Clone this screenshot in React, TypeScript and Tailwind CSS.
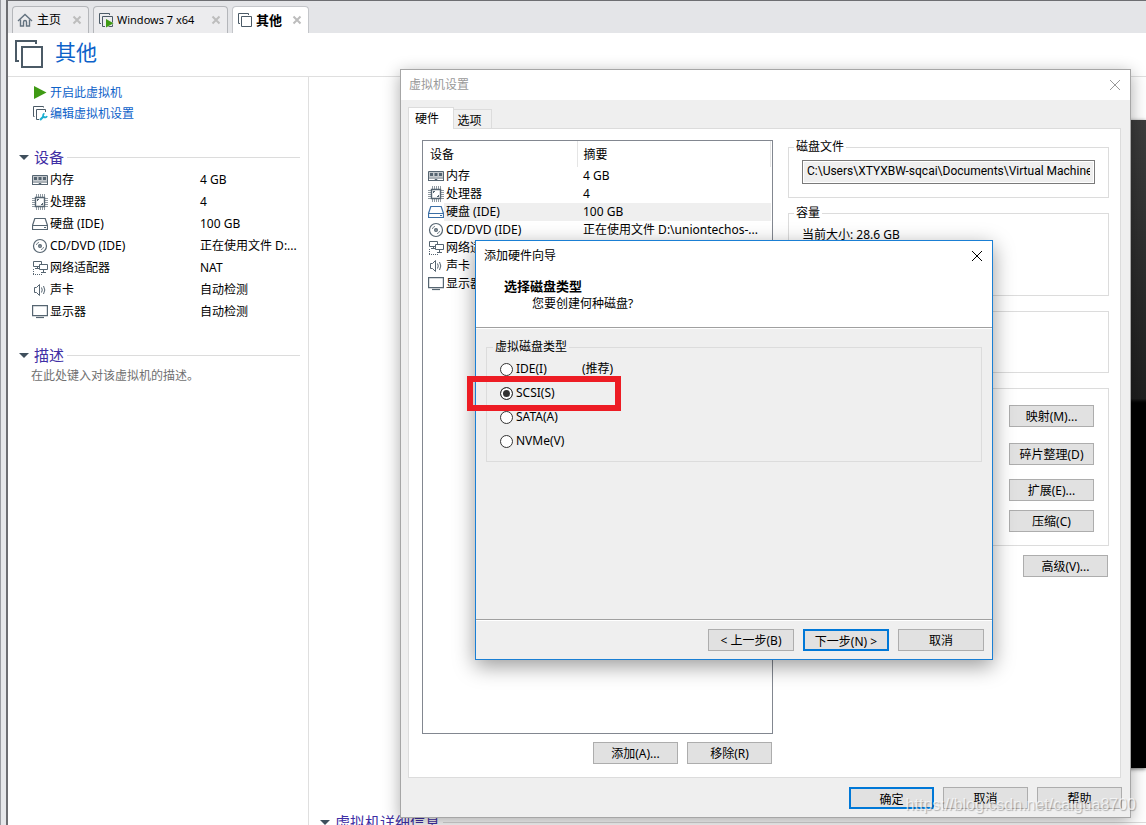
import { useState, type ReactNode } from "react";

type IconProps = { className?: string };

const MemoryIcon = ({ className = "" }: IconProps) => (
  <svg className={`h-4 w-4 shrink-0 ${className}`} viewBox="0 0 16 16" fill="none" stroke="currentColor">
    <path d="M.5 3.500h15v9h-15z" fill="#fff" />
    <path d="M1 4h14v5H1z" fill="currentColor" fillOpacity=".35" stroke="none" />
    <path d="M2 5h3v3H2zM6.500 5h3v3h-3zM11 5h3v3h-3z" fill="currentColor" stroke="none" />
    <path d="M0 10h16" />
    <path d="M6 12.500h1v-1h2v1h1" />
    <path d="M0 12.500h16" />
  </svg>
);

const CpuIcon = ({ className = "" }: IconProps) => (
  <svg className={`h-4 w-4 shrink-0 ${className}`} viewBox="0 0 16 16" fill="none" stroke="currentColor">
    <path d="M3.500 3.500h9v9h-9z" fill="#fff" strokeWidth="1.400" />
    <path d="M4.500 0v3M6.500 0v3M8.500 0v3M10.500 0v3M4.500 13v3M6.500 13v3M8.500 13v3M10.500 13v3M0 4.500h3M0 6.500h3M0 8.500h3M0 10.500h3M0 12.500h3M13 4.500h3M13 6.500h3M13 8.500h3M13 10.500h3M13 12.500h3M12.500 0v3M12.500 13v3" strokeOpacity=".65" />
    <path d="M5 5h2v1H6v1H5zM9 10h1V9h1v2H9z" fill="currentColor" stroke="none" />
  </svg>
);

const DiskIcon = ({ className = "" }: IconProps) => (
  <svg className={`h-4 w-4 shrink-0 ${className}`} viewBox="0 0 16 16" fill="none" stroke="currentColor">
    <path d="M2.800 2.500h10.400l2.300 7v4H.5v-4z" fill="#fff" strokeWidth="1.200" />
    <path d="M.5 9.500h15" />
    <path d="M12 11.500h2" />
  </svg>
);

const DiscIcon = ({ className = "" }: IconProps) => (
  <svg className={`h-4 w-4 shrink-0 ${className}`} viewBox="0 0 16 16" fill="none" stroke="currentColor">
    <circle cx="8" cy="8" r="6.500" fill="#fff" strokeWidth="1.200" />
    <circle cx="8" cy="8" r="1.300" strokeWidth="1.400" />
    <path d="M4.300 7A4 4 0 0 1 7 4.300M11.700 9A4 4 0 0 1 9 11.700" strokeOpacity=".8" />
  </svg>
);

const NetworkIcon = ({ className = "" }: IconProps) => (
  <svg className={`h-4 w-4 shrink-0 ${className}`} viewBox="0 0 16 16" fill="none" stroke="currentColor">
    <path d="M1.500 1.500h8v5h-8z" fill="#fff" />
    <path d="M5.500 7v1M3 8.500h4" />
    <path d="M7.500 4.500h8v5h-8z" fill="#fff" />
    <path d="M11.500 10v2M9 12.500h5" />
    <path d="M1.500 9v5M1 14.500h10" strokeDasharray="1 1" />
  </svg>
);

const SoundIcon = ({ className = "" }: IconProps) => (
  <svg className={`h-4 w-4 shrink-0 ${className}`} viewBox="0 0 16 16" fill="none" stroke="currentColor">
    <path d="M2.500 5.500h2l3-3v11l-3-3h-2z" />
    <path d="M9.500 5.500q1.500 2.500 0 5M11.500 4q2.600 4 0 8" />
  </svg>
);

const DisplayIcon = ({ className = "" }: IconProps) => (
  <svg className={`h-4 w-4 shrink-0 ${className}`} viewBox="0 0 16 16" fill="none" stroke="currentColor">
    <path d="M.6 1.600h14.800v10H.6z" fill="#fff" strokeWidth="1.200" />
    <path d="M4 13.500h8" strokeWidth="1.200" />
  </svg>
);

const MachineIcon = ({ className = "" }: IconProps) => (
  <svg className={`shrink-0 text-[#4b5a66] ${className}`} viewBox="0 0 28 28" fill="none" stroke="currentColor" strokeWidth="2">
    <path d="M4 21H1V1h20v3" />
    <path d="M7 7h20v20H7z" />
  </svg>
);

const SmallMachineIcon = ({ children }: { children?: ReactNode }) => (
  <svg className="h-4 w-4 shrink-0 text-[#4b5a66]" viewBox="0 0 16 16" fill="none" stroke="currentColor">
    <path d="M3 11.500H1.500v-10h10V3" />
    <path d="M4.500 4.500h10v10h-10z" />
    {children}
  </svg>
);

const HomeIcon = () => (
  <svg className="h-4 w-4 shrink-0 text-[#647380]" viewBox="0 0 16 16" fill="none" stroke="currentColor" strokeWidth="1.400">
    <path d="M1 9l7-6.500L15 9" />
    <path d="M3.500 7.500V14h3v-4a1.500 1.500 0 0 1 3 0v4h3V7.500" />
  </svg>
);

const CloseIcon = ({ className = "" }: IconProps) => (
  <svg className={`h-3 w-3 ${className}`} viewBox="0 0 12 12" stroke="currentColor">
    <path d="M1 1l10 10M11 1 1 11" />
  </svg>
);

const devices = [
  { name: "内存", value: "4 GB", summary: "4 GB", icon: MemoryIcon },
  { name: "处理器", value: "4", summary: "4", icon: CpuIcon },
  { name: "硬盘 (IDE)", value: "100 GB", summary: "100 GB", icon: DiskIcon },
  { name: "CD/DVD (IDE)", value: "正在使用文件 D:...", summary: "正在使用文件 D:\\uniontechos-...", icon: DiscIcon },
  { name: "网络适配器", value: "NAT", summary: "", icon: NetworkIcon },
  { name: "声卡", value: "自动检测", summary: "", icon: SoundIcon },
  { name: "显示器", value: "自动检测", summary: "", icon: DisplayIcon },
];

const diskTypes = [
  { id: "ide", label: "IDE(I)", note: "(推荐)" },
  { id: "scsi", label: "SCSI(S)" },
  { id: "sata", label: "SATA(A)" },
  { id: "nvme", label: "NVMe(V)" },
];

type DialogButtonProps = { children: ReactNode; primary?: boolean; wide?: boolean };

const DialogButton = ({ children, primary = false, wide = false }: DialogButtonProps) => (
  <button
    type="button"
    className={`h-[22px] shrink-0 bg-[#e1e1e1] pt-0.5 text-center leading-[18px] whitespace-nowrap ${
      wide ? "w-[86px]" : "w-[85px]"
    } ${primary ? "border-2 border-[#0078d7]" : "border border-[#adadad]"}`}
  >
    {children}
  </button>
);

const TabClose = () => (
  <button type="button" aria-label="关闭" className="ml-auto text-[#bdbdbd]">
    <svg className="h-[10px] w-[10px]" viewBox="0 0 10 10" stroke="currentColor" strokeWidth="2">
      <path d="M1.500 1.500l7 7M8.500 1.500l-7 7" />
    </svg>
  </button>
);

const SectionHeading = ({ children }: { children: ReactNode }) => (
  <h2 className="flex h-[22px] items-center text-[15px] whitespace-nowrap text-[#3f2fa5]">
    <svg className="mr-[5px] h-[5px] w-[10px] text-[#3f4f5c]" viewBox="0 0 10 5">
      <path d="M0 0h10L5 5z" fill="currentColor" />
    </svg>
    {children}
    <span className="ml-[3px] h-px flex-1 bg-[#dcdcdc]" />
  </h2>
);

const Workspace = () => (
  <div className="flex h-full">
    <div className="w-[6px] shrink-0 border-l border-[#9a9ca2] bg-[#e6e7ea]" />
    <div className="flex min-w-0 flex-1 flex-col border-t border-l-2 border-[#6d6e72] bg-white">
      <nav className="flex h-8 shrink-0 items-end gap-1 bg-[#e4e5e8] pl-1">
        <div className="flex h-[27px] w-[77px] items-center rounded-t-sm border border-b-0 border-[#b4b6ba] bg-[#ececee] pr-1.5 pl-1">
          <HomeIcon />
          <span className="ml-1">主页</span>
          <TabClose />
        </div>
        <div className="flex h-[27px] w-[135px] items-center rounded-t-sm border border-b-0 border-[#b4b6ba] bg-[#ececee] pr-1.5 pl-1">
          <SmallMachineIcon>
            <path d="M7 5.500l9 6-9 5z" fill="#ececee" stroke="none" />
            <path d="M8 7l7.500 4.300L8 15.500z" fill="#3f9a14" stroke="none" />
          </SmallMachineIcon>
          <span className="ml-[3px] text-[11px]">Windows 7 x64</span>
          <TabClose />
        </div>
        <div className="flex h-[27px] w-[77px] items-center rounded-t-sm border border-b-0 border-[#c4c6ca] bg-white pr-1.5 pl-1">
          <SmallMachineIcon />
          <span className="ml-[3px] text-[13px] font-bold">其他</span>
          <TabClose />
        </div>
      </nav>

      <header className="flex h-11 shrink-0 items-center gap-3 border-b border-[#dfdfdf] pb-0.5 pl-[7px]">
        <MachineIcon className="h-7 w-7" />
        <h1 className="pb-1 text-[21px] leading-7 text-[#0d62c9]">其他</h1>
      </header>

      <div className="flex min-h-0 flex-1">
        <aside className="w-[301px] shrink-0 border-r border-[#dfdfdf] pt-[5px] pr-2 pl-[11px]">
          <div className="flex flex-col pl-[13px] text-[#0d62c9]">
            <a href="#start" className="flex h-[21px] items-center gap-0.5">
              <svg className="h-4 w-4" viewBox="0 0 16 16">
                <path d="M2 1 14.500 7.500 2 14z" fill="#3f9a14" />
              </svg>
              开启此虚拟机
            </a>
            <a href="#edit" className="flex h-[21px] items-center gap-0.5">
              <svg className="h-4 w-4 shrink-0 text-[#4b5a66]" viewBox="0 0 16 16" fill="none" stroke="currentColor">
                <path d="M2.500 10.500h-1v-10h10v1" />
                <path d="M7 13.500H4.500v-10h9V6" />
                <path d="M8 14l4-4" stroke="#1aaed0" strokeWidth="2.200" />
                <path d="M12.500 7.500a2 2 0 1 0 2.500 2.500" stroke="#1aaed0" strokeWidth="1.700" />
              </svg>
              编辑虚拟机设置
            </a>
          </div>

          <section className="mt-[22px]">
            <SectionHeading>设备</SectionHeading>
            <ul className="pt-px pl-[13px]">
              {devices.map((device) => (
                <li key={device.name} className="flex h-[22px] items-center">
                  <device.icon className="text-[#566571]" />
                  <span className="ml-0.5 w-[150px]">{device.name}</span>
                  <span className="whitespace-nowrap">{device.value}</span>
                </li>
              ))}
            </ul>
          </section>

          <section className="mt-[21px]">
            <SectionHeading>描述</SectionHeading>
            <p className="pl-3 leading-5 text-[#707070]">在此处键入对该虚拟机的描述。</p>
          </section>
        </aside>

        <main className="flex min-w-0 flex-1 flex-col pt-[43px] pl-[11px]">
          <div className="mb-[43px] ml-auto w-1/2 flex-1 bg-linear-to-b from-[#3c3c3c] from-0% via-[#1f1f1f] via-43% to-black to-44% shadow-[0_1px_4px_#00000099]" />
          <div className="h-[14px]">
            <SectionHeading>虚拟机详细信息</SectionHeading>
          </div>
        </main>
      </div>
    </div>
  </div>
);

const DeviceTable = () => (
  <div className="flex-1 border border-[#828790] bg-white pr-px">
    <table className="w-full table-fixed border-collapse text-left">
      <thead>
        <tr className="h-[26px]">
          <th className="w-[154px] border-r border-[#e5e5e5] pt-0.5 pl-[7px] font-normal">设备</th>
          <th className="border-r border-[#e5e5e5] pt-0.5 pl-1.5 font-normal">摘要</th>
        </tr>
      </thead>
      <tbody>
        {devices.map((device) => {
          const selected = device.name.startsWith("硬盘");
          return (
            <tr key={device.name} className="h-[18px]">
              <td className="p-0">
                <div className="flex h-[18px] items-center pl-[5px]">
                  <device.icon className={selected ? "text-[#3b6ea5]" : "text-[#566571]"} />
                  <span className={`h-[18px] flex-1 pl-0.5 ${selected ? "bg-[#efefef]" : ""}`}>{device.name}</span>
                </div>
              </td>
              <td className={`py-0 pl-1.5 whitespace-nowrap ${selected ? "bg-[#efefef]" : ""}`}>{device.summary}</td>
            </tr>
          );
        })}
      </tbody>
    </table>
  </div>
);

const SettingsDialog = () => (
  <div
    role="dialog"
    aria-label="虚拟机设置"
    className="absolute top-[69px] right-[15px] bottom-[7px] left-[400px] flex flex-col border border-[#a6a6a6] bg-[#efefef] shadow-[0_4px_16px_#00000055]"
  >
    <div className="flex h-[30px] shrink-0 items-center justify-between bg-white pr-[9px] pl-2 text-[#999]">
      <span>虚拟机设置</span>
      <button type="button" aria-label="关闭">
        <CloseIcon />
      </button>
    </div>

    <div role="tablist" className="mx-[7px] mt-[7px] flex h-[21px] shrink-0 items-end">
      <button type="button" role="tab" aria-selected="true" className="relative z-10 -mb-px h-[22px] w-[46px] border border-b-0 border-[#dcdcdc] bg-white pr-2">
        硬件
      </button>
      <button type="button" role="tab" aria-selected="false" className="-ml-px h-[19px] w-[39px] border border-b-0 border-[#dcdcdc] bg-[#f0f0f0] pt-0.5 pr-1.5">
        选项
      </button>
    </div>

    <div className="mr-[9px] ml-[7px] flex min-h-0 flex-1 gap-[15px] border border-[#dcdcdc] bg-white pt-[11px] pr-[11px] pb-[13px] pl-[13px]">
      <div className="flex w-[351px] shrink-0 flex-col">
        <DeviceTable />
        <div className="mt-2 flex justify-end gap-[9px] pr-px">
          <DialogButton>添加(A)...</DialogButton>
          <DialogButton>移除(R)</DialogButton>
        </div>
      </div>

      <div className="-mt-0.5 flex min-w-0 flex-1 flex-col">
        <fieldset className="h-[60px] min-w-0 border border-[#dcdcdc] px-[13px]">
          <legend className="-ml-2 px-0.5">磁盘文件</legend>
          <input
            readOnly
            aria-label="磁盘文件"
            defaultValue="C:\Users\XTYXBW-sqcai\Documents\Virtual Machines"
            className="mt-1 block h-6 w-full border border-[#7a7a7a] bg-[#efefef] px-1 pb-0.5 font-[Roboto,sans-serif] outline-1 -outline-offset-2 outline-white"
          />
        </fieldset>
        <fieldset className="mt-1.5 h-[92px] border border-[#dcdcdc] px-[13px]">
          <legend className="-ml-2 px-0.5">容量</legend>
          <p className="pt-1">当前大小: 28.6 GB</p>
        </fieldset>
        <div className="mt-[15px] h-[62px] border border-[#dcdcdc]" />
        <div className="mt-[15px] flex h-[158px] flex-col items-end border border-[#dcdcdc] pt-4 pr-[14px]">
          <DialogButton>映射(M)...</DialogButton>
          <div className="mt-4 mb-[14px] flex">
            <DialogButton>碎片整理(D)</DialogButton>
          </div>
          <div className="flex flex-col gap-[9px]">
            <DialogButton>扩展(E)...</DialogButton>
            <DialogButton>压缩(C)</DialogButton>
          </div>
        </div>
        <div className="mt-[9px] flex justify-end pr-px">
          <DialogButton>高级(V)...</DialogButton>
        </div>
      </div>
    </div>

    <div className="flex shrink-0 justify-end gap-[9px] pt-[9px] pr-2 pb-2">
      <DialogButton primary>确定</DialogButton>
      <DialogButton>取消</DialogButton>
      <DialogButton>帮助</DialogButton>
    </div>
  </div>
);

const HardwareWizard = () => {
  const [diskType, setDiskType] = useState("scsi");

  return (
    <div
      role="dialog"
      aria-label="添加硬件向导"
      className="absolute top-[240px] left-[475px] flex h-[420px] w-[518px] flex-col border border-[#1a7fd4] bg-[#efefef] shadow-[0_6px_20px_#00000066]"
    >
      <div className="flex h-[29px] shrink-0 items-center justify-between bg-white pr-[9px] pl-2">
        <span>添加硬件向导</span>
        <button type="button" aria-label="关闭">
          <CloseIcon />
        </button>
      </div>
      <div className="border-b border-[#a0a0a0] bg-white pt-[7px] pb-[14px] pl-7">
        <h2 className="text-[13px] leading-[18px] font-bold">选择磁盘类型</h2>
        <p className="pl-7">您要创建何种磁盘?</p>
      </div>
      <div className="flex-1 border-t border-white px-[10px] pt-[9px]">
        <fieldset className="border border-[#dcdcdc] px-[13px] pb-2">
          <legend className="-ml-[7px] px-0.5">虚拟磁盘类型</legend>
          <div className="pt-px">
            {diskTypes.map((type) => (
              <label key={type.id} className="flex h-6 items-center">
                <input
                  type="radio"
                  name="disk-type"
                  checked={diskType === type.id}
                  onChange={() => setDiskType(type.id)}
                  className="mr-[3px] h-[13px] w-[13px] appearance-none rounded-full border border-[#333] bg-white checked:bg-[#333] checked:shadow-[inset_0_0_0_2px_#fff]"
                />
                <span className="w-[66px]">{type.label}</span>
                {type.note && <span>{type.note}</span>}
              </label>
            ))}
          </div>
        </fieldset>
      </div>
      <div className="border-t border-[#a0a0a0]">
        <div className="flex justify-end gap-[9px] border-t border-white pt-2 pr-2 pb-2">
          <DialogButton wide>&lt; 上一步(B)</DialogButton>
          <DialogButton wide primary>下一步(N) &gt;</DialogButton>
          <DialogButton wide>取消</DialogButton>
        </div>
      </div>
    </div>
  );
};

const App = () => (
  <div className="relative h-screen overflow-hidden bg-white font-['Noto_Sans','Noto_Sans_CJK_SC',sans-serif] text-[12px] leading-[18px] text-black">
    <Workspace />
    <SettingsDialog />
    <HardwareWizard />
    <div className="pointer-events-none absolute top-[376px] left-[467px] h-[35px] w-[154px] border-[6px] border-[#ed1c24]" />
    <span className="pointer-events-none absolute right-[10px] bottom-[10px] font-['Liberation_Sans',sans-serif] text-[16px] leading-5 text-white/70 [text-shadow:1px_1px_1px_#00000044]">
      https://blog.csdn.net/caigua8700
    </span>
  </div>
);

export default App;
